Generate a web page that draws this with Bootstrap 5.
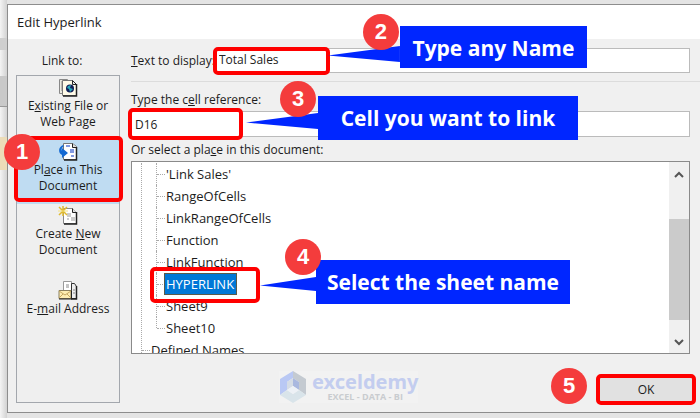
<!DOCTYPE html>
<html lang="en">
<head>
<meta charset="utf-8">
<meta name="viewport" content="width=device-width, initial-scale=1">
<title>Edit Hyperlink</title>
<link href="https://cdn.jsdelivr.net/npm/bootstrap@5.3.0/dist/css/bootstrap.min.css" rel="stylesheet">
<style>
  body { background: #e4e4e4; color: #1c1c1c; font: 12px/16px "Open Sans", "Noto Sans", sans-serif; overflow: hidden; }
  button { font: inherit; color: inherit; }
  .sheet-edge { width: 7px; background: linear-gradient(90deg, #f4f4f4, #d2d2d2); }
  .edge-top { height: 38px; }
  .edge-head { height: 12px; background: #cfcfcf; }
  .edge-gap { height: 26px; }
  .edge-tab { height: 31px; background: #c9c9c9; border-bottom: 1px solid #999; }
  .edge-space { height: 30px; }
  .edge-mark { height: 33px; background: #ecdcb8; }
  .dialog-box { margin-top: 4px; margin-bottom: 5px; background: #f0f0f0; border: 1px solid #8d8d8d; border-right: 0; }
  .title-bar { height: 34px; padding-left: 9px; background: #fff; font-size: 13px; }
  .dialog-body { padding-left: 8px; gap: 11px; }
  .link-col { width: 104px; padding-top: 8px; padding-bottom: 9px; }
  .link-head { height: 28px; padding-right: 12px; }
  .link-list { border: 1px solid #a3a7ad; background: #efefef; }
  .link-item { position: relative; display: flex; flex-direction: column; align-items: center; justify-content: flex-start; height: 64px; padding: 2px 0 0; border: 0; background: transparent; line-height: 16px; }
  .link-item svg { flex: none; margin-bottom: 1px; }
  .link-item.chosen { background: #bfdcf2; }
  .link-item.mail { margin-top: 11px; }
  .main-col { padding: 9px 10px 7px 0; }
  .field { height: 26px; border: 1px solid #bbb; border-radius: 0; background: #fff; padding: 0 3px; font-size: 12px; color: #222; outline: 0; }
  .field.name-field { height: 25px; padding-bottom: 3px; }
  .rule { height: 1px; margin: 8px -10px 9px 0; background: #dcdcdc; }
  .field-label { height: 18px; margin-bottom: 2px; line-height: 18px; }
  .tree-box { height: 193px; border: 1px solid #8a8a8a; background: #fff; }
  .tree { font-size: 13px; line-height: 22px; padding-top: 1px; overflow: hidden; }
  .tree ul { margin: 0 0 0 9px; padding: 0; border-left: 1px dotted #aaa; list-style: none; }
  .branch { position: relative; display: flex; height: 22px; margin-left: 14px; border-left: 1px dotted #aaa; align-items: center; }
  .branch::before { content: ""; width: 8px; border-top: 1px dotted #aaa; }
  .branch.end { border-left-color: transparent; }
  .branch.end::after { content: ""; position: absolute; left: -1px; top: 0; height: 11px; border-left: 1px dotted #aaa; }
  .branch.outer { margin-left: 0; border-left: 0; }
  .branch span { padding: 0 2px 0 1px; white-space: nowrap; }
  .branch .picked { background: #0078d7; color: #fff; outline: 1px solid #5a5a4a; line-height: 20px; }
  .scroll-track { width: 20px; background: #f0f0f0; }
  .scroll-track button { height: 24px; border: 0; background: transparent; padding: 0; }
  .scroll-thumb { height: 101px; margin-top: 33px; background: #cbcbcb; }
  .footer-row { margin-top: 17px; padding-left: 148px; margin-right: -6px; }
  .brand { background: #f2f2f2; height: 32px; gap: 5px; }
  .brand-name { font: 700 20px/20px "Noto Sans", sans-serif; color: #c3cdef; }
  .brand-tag { font: 700 9px/10px "Open Sans", sans-serif; color: #c9cccf; }
  .ok-button { width: 100px; height: 31px; margin-top: 3px; border: 4px solid #f00; border-radius: 5px; background: #e1e1e1; padding: 0; }
  .ring { position: absolute; border: 4px solid #f00; border-radius: 5px; pointer-events: none; z-index: 2; }
  .step { position: absolute; z-index: 4; width: 36px; height: 36px; border-radius: 50%; background: #f43c3c; color: #fff; font: 700 22px/36px "Liberation Sans", sans-serif; text-align: center; }
  .callout { position: absolute; z-index: 3; background: #0026ff; color: #fff; font: 700 21px/44px "Open Sans", sans-serif; text-align: center; white-space: nowrap; }
  .callout::before { content: ""; position: absolute; right: 100%; background: #0026ff; clip-path: polygon(0 60%, 100% 0, 100% 100%); }
  .ring-one { inset: -4px -4px 2px -3px; }
  .step-one { left: -13px; top: -6px; }
  .ring-two { left: -2px; top: -1px; width: 117px; height: 28px; }
  .step-two { left: 148px; top: -34px; }
  .say-two { left: 185px; top: -22px; width: 187px; height: 42px; }
  .say-two::before { width: 72px; height: 16px; top: 20px; }
  .ring-three { left: -3px; top: -3px; width: 115px; height: 32px; }
  .step-three { left: 149px; top: -30px; }
  .say-three { left: 187px; top: -15px; width: 260px; height: 44px; }
  .say-three::before { width: 72px; height: 16px; top: 17px; }
  .ring-four { left: 19px; top: 106px; width: 110px; height: 36px; }
  .step-four { left: 154px; top: 78px; }
  .say-four { left: 185px; top: 99px; width: 254px; height: 44px; }
  .say-four::before { width: 56px; height: 14px; top: 17px; }
  .step-five { right: 109px; top: -3px; }
</style>
<script src="https://cdn.jsdelivr.net/npm/bootstrap@5.3.0/dist/js/bootstrap.bundle.min.js"></script>
</head>
<body>
<div class="d-flex">
  <div class="sheet-edge flex-shrink-0" aria-hidden="true">
    <div class="edge-top"></div><div class="edge-head"></div><div class="edge-gap"></div><div class="edge-tab"></div><div class="edge-space"></div><div class="edge-mark"></div>
  </div>
  <main class="dialog-box flex-grow-1">
    <header class="title-bar d-flex align-items-center">Edit Hyperlink</header>
    <div class="dialog-body d-flex">
      <nav class="link-col d-flex flex-column flex-shrink-0" aria-label="Link to">
        <div class="link-head d-flex align-items-center justify-content-center">Link to:</div>
        <div class="link-list d-flex flex-column flex-grow-1">
          <button type="button" class="link-item">
            <svg width="20" height="19" viewBox="0 0 20 19"><path d="M1.500 1.500h8v14h-8z" fill="#e9e9e0" stroke="#888"/><path d="M3 4h4M3 6h3M3 8h3M3 10h3M3 12h3" stroke="#888"/><path d="M4.500 2.500h10l4 4v11h-14z" fill="#fffbe8" stroke="#777"/><path d="M14.500 2.500v4h4z" fill="#eee" stroke="#222"/><path d="M18.500 6v12H5" fill="none" stroke="#222" stroke-width="1.500"/><circle cx="12" cy="10.500" r="4" fill="#111d55"/><path d="M10 8l3-1-1 3 3 1-3 3-1-3-2-1z" fill="#29a9bd"/></svg>
            <span>E<u>x</u>isting File or<br>Web Page</span>
          </button>
          <button type="button" class="link-item chosen" aria-pressed="true">
            <svg width="20" height="19" viewBox="0 0 20 19"><path d="M5.500 1.500h9l4 3v13h-13z" fill="#fff" stroke="#777"/><path d="M14.500 1.500v4h4" fill="#ddd" stroke="#222"/><path d="M18.500 5v13H6" fill="none" stroke="#222" stroke-width="1.500"/><path d="M8 4h4M12 8h4M12 10h4M13 14h3" stroke="#5878d8" stroke-width="1.500"/><path d="M5 3C0 5 0 11 4 13v3l6-5-6-5v3C3 7 4 5 6 4z" fill="#1469d2"/></svg>
            <span>Pl<u>a</u>ce in This<br>Document</span>
            <span class="ring ring-one"></span><span class="step step-one">1</span>
          </button>
          <button type="button" class="link-item">
            <svg width="20" height="19" viewBox="0 0 20 19"><path d="M5.500 2.500h9l4 4v11h-13z" fill="#fff" stroke="#888"/><path d="M14.500 2.500v4h4" fill="#ddd" stroke="#222"/><path d="M18.500 6v12H6" fill="none" stroke="#222" stroke-width="1.500"/><path d="M9 8h4M9 10h4M9 13h2" stroke="#999"/><path d="M13 11h4v4h-4z" fill="#ccc"/><path d="M1 1l8 8M9 1L1 9M5 0v10" stroke="#dfb92e" stroke-width="1.500"/><path d="M0 5h10" stroke="#f4e283"/></svg>
            <span>Create <u>N</u>ew<br>Document</span>
          </button>
          <button type="button" class="link-item mail">
            <svg width="20" height="19" viewBox="0 0 20 19"><path d="M5.500 .5h8v12h-8z" fill="#fff" stroke="#999"/><path d="M13.500 2.500h3l2 3v12h-5z" fill="#eee" stroke="#333"/><path d="M18.500 5v13H13" fill="none" stroke="#222" stroke-width="1.500"/><path d="M8 4h3M8 6h3M15 9h2M15 12h2" stroke="#888"/><path d="M1 9.500h12v8H1z" fill="#fdedb2" stroke="#8b8060"/><path d="M1 10l6 4 6-4M1 17l4-4M13 17l-4-4" fill="none" stroke="#c5a760"/><path d="M1 18h12.500v-8" fill="none" stroke="#222"/></svg>
            <span>E-<u>m</u>ail Address</span>
          </button>
        </div>
      </nav>
      <form class="main-col flex-grow-1" onsubmit="return false">
        <div class="d-flex align-items-center">
          <label for="shown" class="flex-shrink-0"><u>T</u>ext to display:</label>
          <div class="position-relative flex-grow-1">
            <input id="shown" class="field name-field w-100 d-block" value="Total Sales">
            <span class="ring ring-two"></span><span class="step step-two">2</span><span class="callout say-two">Type any Name</span>
          </div>
        </div>
        <div class="rule"></div>
        <label for="cellref" class="field-label d-block">Type the c<u>e</u>ll reference:</label>
        <div class="position-relative">
          <input id="cellref" class="field w-100 d-block" value="D16">
          <span class="ring ring-three"></span><span class="step step-three">3</span><span class="callout say-three">Cell you want to link</span>
        </div>
        <div class="field-label mt-1" id="treelabel">Or select a pla<u>c</u>e in this document:</div>
        <div class="position-relative">
          <div class="tree-box d-flex">
            <div class="tree flex-grow-1">
              <ul role="tree" aria-labelledby="treelabel">
                <li class="branch" role="treeitem"><span>'Link Sales'</span></li>
                <li class="branch" role="treeitem"><span>RangeOfCells</span></li>
                <li class="branch" role="treeitem"><span>LinkRangeOfCells</span></li>
                <li class="branch" role="treeitem"><span>Function</span></li>
                <li class="branch" role="treeitem"><span>LinkFunction</span></li>
                <li class="branch" role="treeitem" aria-selected="true"><span class="picked">HYPERLINK</span></li>
                <li class="branch" role="treeitem"><span>Sheet9</span></li>
                <li class="branch end" role="treeitem"><span>Sheet10</span></li>
                <li class="branch outer" role="treeitem"><span>Defined Names</span></li>
              </ul>
            </div>
            <div class="scroll-track d-flex flex-column flex-shrink-0">
              <button type="button" aria-label="Scroll up"><svg width="10" height="8" viewBox="0 0 10 8"><path d="M1 6l4-4 4 4" fill="none" stroke="#555" stroke-width="2"/></svg></button>
              <div class="scroll-thumb"></div>
              <button type="button" class="mt-auto" aria-label="Scroll down"><svg width="10" height="8" viewBox="0 0 10 8"><path d="M1 2l4 4 4-4" fill="none" stroke="#555" stroke-width="2"/></svg></button>
            </div>
          </div>
          <span class="ring ring-four"></span><span class="step step-four">4</span><span class="callout say-four">Select the sheet name</span>
        </div>
        <div class="footer-row d-flex position-relative">
          <div class="brand d-flex align-items-center">
            <svg width="28" height="32" viewBox="0 0 28 32"><path d="M14 0L1 8v16l7-5v-8l6-4z" fill="#b9c8f4"/><path d="M14 0l13 8v16l-7-5v-8l-6-4z" fill="#c4cad1"/><path d="M1 24l13 8 13-8-7-5-6 4-6-4z" fill="#d9e4ea"/><path d="M14 7l6 4v8l-6-4z" fill="#a9b8df"/><path d="M14 7l-6 4v8l6-4z" fill="#d5dce5"/><path d="M8 19l6-4 6 4-6 4z" fill="#edf1f6"/></svg>
            <div class="text-center"><div class="brand-name">exceldemy</div><div class="brand-tag">EXCEL - DATA - BI</div></div>
          </div>
          <button type="submit" class="ok-button ms-auto">OK</button>
          <span class="step step-five">5</span>
        </div>
      </form>
    </div>
  </main>
</div>
</body>
</html>
